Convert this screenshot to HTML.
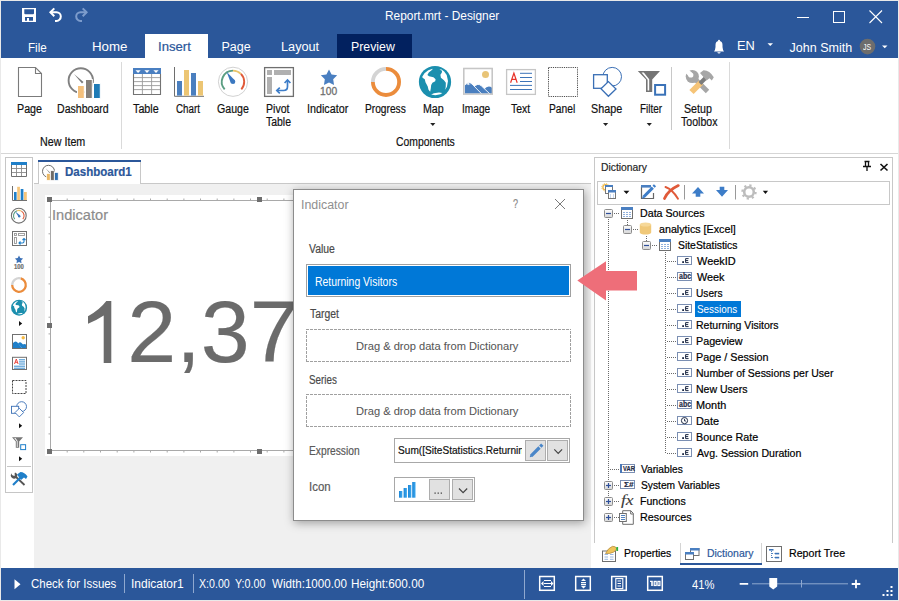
<!DOCTYPE html>
<html><head><meta charset="utf-8"><style>
html,body{margin:0;padding:0;width:899px;height:601px;overflow:hidden;background:#e9e9e9}
body{position:relative;font-family:"Liberation Sans",sans-serif}
div,svg{position:absolute;box-sizing:border-box}
.t{white-space:nowrap;line-height:1;-webkit-text-stroke:0.2px currentColor}
</style></head><body>
<div style="left:1px;top:1px;width:897px;height:599px;background:#fff"></div>
<div style="left:1px;top:1px;width:897px;height:57px;background:#2b579a"></div>
<div style="left:1px;top:568px;width:897px;height:32px;background:#2b579a"></div>
<div class="t" style="left:384.57px;top:10px;font-size:12.8px;color:#fff;transform:scaleX(0.9287);transform-origin:0 0;-webkit-text-stroke:0;">Report.mrt - Designer</div>
<div style="left:797px;top:17px;width:12px;height:1px;background:#fff"></div>
<div style="left:833px;top:11px;width:12px;height:12px;border:1px solid #fff"></div>
<svg style="left:869px;top:10px;" width="14" height="14" viewBox="0 0 14 14"><path d="M0.5 0.5L13 13M13 0.5L0.5 13" stroke="#fff" stroke-width="1.1"/></svg>
<div style="left:145px;top:34px;width:63px;height:24px;background:#fff"></div>
<div style="left:337px;top:34px;width:75px;height:24px;background:#02215f"></div>
<div class="t" style="left:27.77px;top:42px;font-size:12.5px;color:#fff;transform:scaleX(0.9316);transform-origin:0 0;-webkit-text-stroke:0;">File</div>
<div class="t" style="left:92.33px;top:41px;font-size:12.5px;color:#fff;transform:scaleX(1.0656);transform-origin:0 0;-webkit-text-stroke:0;">Home</div>
<div class="t" style="left:158.45px;top:41px;font-size:12.5px;color:#2b579a;transform:scaleX(1.0500);transform-origin:0 0;">Insert</div>
<div class="t" style="left:221.50px;top:41px;font-size:12.5px;color:#fff;-webkit-text-stroke:0;">Page</div>
<div class="t" style="left:281.18px;top:41px;font-size:12.5px;color:#fff;transform:scaleX(1.0162);transform-origin:0 0;-webkit-text-stroke:0;">Layout</div>
<div class="t" style="left:350.61px;top:41px;font-size:12.5px;color:#fff;transform:scaleX(0.9864);transform-origin:0 0;-webkit-text-stroke:0;">Preview</div>
<div class="t" style="left:737.27px;top:40px;font-size:12.5px;color:#fff;transform:scaleX(1.0250);transform-origin:0 0;-webkit-text-stroke:0;">EN</div>
<div class="t" style="left:789.60px;top:42px;font-size:12.5px;color:#fff;-webkit-text-stroke:0;">John Smith</div>
<div style="left:1px;top:153px;width:897px;height:1px;background:#d6d6d6"></div>
<div style="left:121px;top:62px;width:1px;height:87px;background:#dadada"></div>
<div style="left:729px;top:62px;width:1px;height:87px;background:#dadada"></div>
<div style="left:671px;top:67px;width:1px;height:63px;background:#c8c8c8"></div>
<div class="t" style="left:16.54px;top:103px;font-size:12.5px;color:#111;transform:scaleX(0.8571);transform-origin:0 0;">Page</div>
<div class="t" style="left:57.45px;top:103px;font-size:12.5px;color:#111;transform:scaleX(0.8450);transform-origin:0 0;">Dashboard</div>
<div class="t" style="left:133.20px;top:103px;font-size:12.5px;color:#111;transform:scaleX(0.8600);transform-origin:0 0;">Table</div>
<div class="t" style="left:175.60px;top:103px;font-size:12.5px;color:#111;transform:scaleX(0.7839);transform-origin:0 0;">Chart</div>
<div class="t" style="left:216.60px;top:103px;font-size:12.5px;color:#111;transform:scaleX(0.8486);transform-origin:0 0;">Gauge</div>
<div class="t" style="left:265.56px;top:103px;font-size:12.5px;color:#111;transform:scaleX(0.8444);transform-origin:0 0;">Pivot</div>
<div class="t" style="left:266.40px;top:116px;font-size:12.5px;color:#111;transform:scaleX(0.8367);transform-origin:0 0;">Table</div>
<div class="t" style="left:307.24px;top:103px;font-size:12.5px;color:#111;transform:scaleX(0.8596);transform-origin:0 0;">Indicator</div>
<div class="t" style="left:364.79px;top:103px;font-size:12.5px;color:#111;transform:scaleX(0.8143);transform-origin:0 0;">Progress</div>
<div class="t" style="left:423.35px;top:103px;font-size:12.5px;color:#111;transform:scaleX(0.8522);transform-origin:0 0;">Map</div>
<div class="t" style="left:462.49px;top:103px;font-size:12.5px;color:#111;transform:scaleX(0.8118);transform-origin:0 0;">Image</div>
<div class="t" style="left:510.90px;top:103px;font-size:12.5px;color:#111;transform:scaleX(0.8348);transform-origin:0 0;">Text</div>
<div class="t" style="left:548.78px;top:103px;font-size:12.5px;color:#111;transform:scaleX(0.8226);transform-origin:0 0;">Panel</div>
<div class="t" style="left:591.24px;top:103px;font-size:12.5px;color:#111;transform:scaleX(0.8629);transform-origin:0 0;">Shape</div>
<div class="t" style="left:639.71px;top:103px;font-size:12.5px;color:#111;transform:scaleX(0.7926);transform-origin:0 0;">Filter</div>
<div class="t" style="left:684.45px;top:103px;font-size:12.5px;color:#111;transform:scaleX(0.8531);transform-origin:0 0;">Setup</div>
<div class="t" style="left:681.00px;top:116px;font-size:12.5px;color:#111;transform:scaleX(0.8465);transform-origin:0 0;">Toolbox</div>
<div class="t" style="left:40.42px;top:136px;font-size:12.2px;color:#111;transform:scaleX(0.8800);transform-origin:0 0;">New Item</div>
<div class="t" style="left:395.60px;top:136px;font-size:12.2px;color:#111;transform:scaleX(0.8507);transform-origin:0 0;">Components</div>
<div style="left:5px;top:157px;width:28px;height:336px;border:1px solid #c6c6c6;background:#fff"></div>
<div style="left:7px;top:466px;width:24px;height:1px;background:#c6c6c6"></div>
<div style="left:34px;top:154px;width:557px;height:414px;background:#f0f0f0"></div>
<div style="left:34px;top:154px;width:557px;height:29px;background:#fff"></div>
<div style="left:34px;top:183px;width:557px;height:1px;background:#c8c8c8"></div>
<div style="left:38px;top:160px;width:103px;height:24px;background:#fff;border-left:1px solid #c8c8c8;border-right:1px solid #c8c8c8"></div>
<div style="left:38px;top:160px;width:103px;height:2px;background:#2b579a"></div>
<div class="t" style="left:65.40px;top:166px;font-size:12px;color:#2b579a;font-weight:700;transform:scaleX(0.9614);transform-origin:0 0;">Dashboard1</div>
<div style="left:45px;top:195px;width:500px;height:261px;background:#fff"></div>
<div style="left:50px;top:200px;width:420px;height:251px;border:1px solid #a9a9a9"></div>
<div style="left:47px;top:197px;width:5px;height:5px;background:#6e6e6e"></div>
<div style="left:47px;top:449px;width:5px;height:5px;background:#6e6e6e"></div>
<div style="left:257px;top:197px;width:5px;height:5px;background:#6e6e6e"></div>
<div style="left:257px;top:449px;width:5px;height:5px;background:#6e6e6e"></div>
<div style="left:467px;top:197px;width:5px;height:5px;background:#6e6e6e"></div>
<div style="left:467px;top:449px;width:5px;height:5px;background:#6e6e6e"></div>
<div style="left:47px;top:323px;width:5px;height:5px;background:#6e6e6e"></div>
<div style="left:467px;top:323px;width:5px;height:5px;background:#6e6e6e"></div>
<div class="t" style="left:51.53px;top:207px;font-size:15px;color:#8c8c8c;transform:scaleX(0.9737);transform-origin:0 0;">Indicator</div>
<svg style="left:0px;top:0px;" width="480" height="460" viewBox="0 0 480 460"><path d="M67.2 198.5V200M67.2 451V452.5" stroke="#a9a9a9" stroke-width="1"/><path d="M83.8 198.5V200M83.8 451V452.5" stroke="#a9a9a9" stroke-width="1"/><path d="M100.5 198.5V200M100.5 451V452.5" stroke="#a9a9a9" stroke-width="1"/><path d="M117.2 198.5V200M117.2 451V452.5" stroke="#a9a9a9" stroke-width="1"/><path d="M133.9 198.5V200M133.9 451V452.5" stroke="#a9a9a9" stroke-width="1"/><path d="M150.5 198.5V200M150.5 451V452.5" stroke="#a9a9a9" stroke-width="1"/><path d="M167.2 198.5V200M167.2 451V452.5" stroke="#a9a9a9" stroke-width="1"/><path d="M183.9 198.5V200M183.9 451V452.5" stroke="#a9a9a9" stroke-width="1"/><path d="M200.5 198.5V200M200.5 451V452.5" stroke="#a9a9a9" stroke-width="1"/><path d="M217.2 198.5V200M217.2 451V452.5" stroke="#a9a9a9" stroke-width="1"/><path d="M233.9 198.5V200M233.9 451V452.5" stroke="#a9a9a9" stroke-width="1"/><path d="M250.5 198.5V200M250.5 451V452.5" stroke="#a9a9a9" stroke-width="1"/><path d="M267.2 198.5V200M267.2 451V452.5" stroke="#a9a9a9" stroke-width="1"/><path d="M283.9 198.5V200M283.9 451V452.5" stroke="#a9a9a9" stroke-width="1"/><path d="M300.6 198.5V200M300.6 451V452.5" stroke="#a9a9a9" stroke-width="1"/><path d="M317.2 198.5V200M317.2 451V452.5" stroke="#a9a9a9" stroke-width="1"/><path d="M333.9 198.5V200M333.9 451V452.5" stroke="#a9a9a9" stroke-width="1"/><path d="M350.6 198.5V200M350.6 451V452.5" stroke="#a9a9a9" stroke-width="1"/><path d="M367.2 198.5V200M367.2 451V452.5" stroke="#a9a9a9" stroke-width="1"/><path d="M383.9 198.5V200M383.9 451V452.5" stroke="#a9a9a9" stroke-width="1"/><path d="M400.6 198.5V200M400.6 451V452.5" stroke="#a9a9a9" stroke-width="1"/><path d="M417.2 198.5V200M417.2 451V452.5" stroke="#a9a9a9" stroke-width="1"/><path d="M433.9 198.5V200M433.9 451V452.5" stroke="#a9a9a9" stroke-width="1"/><path d="M450.6 198.5V200M450.6 451V452.5" stroke="#a9a9a9" stroke-width="1"/><path d="M48.5 217.2H50M470 217.2H471.5" stroke="#a9a9a9" stroke-width="1"/><path d="M48.5 233.8H50M470 233.8H471.5" stroke="#a9a9a9" stroke-width="1"/><path d="M48.5 250.5H50M470 250.5H471.5" stroke="#a9a9a9" stroke-width="1"/><path d="M48.5 267.2H50M470 267.2H471.5" stroke="#a9a9a9" stroke-width="1"/><path d="M48.5 283.9H50M470 283.9H471.5" stroke="#a9a9a9" stroke-width="1"/><path d="M48.5 300.5H50M470 300.5H471.5" stroke="#a9a9a9" stroke-width="1"/><path d="M48.5 317.2H50M470 317.2H471.5" stroke="#a9a9a9" stroke-width="1"/><path d="M48.5 333.9H50M470 333.9H471.5" stroke="#a9a9a9" stroke-width="1"/><path d="M48.5 350.5H50M470 350.5H471.5" stroke="#a9a9a9" stroke-width="1"/><path d="M48.5 367.2H50M470 367.2H471.5" stroke="#a9a9a9" stroke-width="1"/><path d="M48.5 383.9H50M470 383.9H471.5" stroke="#a9a9a9" stroke-width="1"/><path d="M48.5 400.5H50M470 400.5H471.5" stroke="#a9a9a9" stroke-width="1"/><path d="M48.5 417.2H50M470 417.2H471.5" stroke="#a9a9a9" stroke-width="1"/><path d="M48.5 433.9H50M470 433.9H471.5" stroke="#a9a9a9" stroke-width="1"/></svg>
<svg style="left:80px;top:290px;" width="40" height="80" viewBox="0 0 40 80"><path d="M23.7 25.5L23.7 73L31.3 73L31.3 11L26.3 11Q20 19.5 8 26.2L8 33.8Q17 30 23.7 25.5Z" fill="#6b6b6b"/></svg>
<div class="t" style="left:127.30px;top:288px;font-size:88px;color:#6b6b6b;">2,37</div>
<div style="left:594px;top:157px;width:299px;height:386px;border:1px solid #c8c8c8;border-bottom:none;background:#fff"></div>
<div class="t" style="left:600.82px;top:162px;font-size:11.8px;color:#1e1e1e;transform:scaleX(0.8769);transform-origin:0 0;">Dictionary</div>
<div style="left:597px;top:181px;width:293px;height:24px;border:1px solid #c8c8c8"></div>
<div style="left:293px;top:189px;width:291px;height:332px;background:#fff;border:1px solid #8c8c8c;box-shadow:1px 2px 9px rgba(0,0,0,0.35)"></div>
<div class="t" style="left:301.47px;top:199px;font-size:12px;color:#8f8f8f;transform:scaleX(1.0333);transform-origin:0 0;-webkit-text-stroke:0">Indicator</div>
<div class="t" style="left:309.00px;top:243px;font-size:12px;color:#4a4a4a;transform:scaleX(0.8667);transform-origin:0 0;">Value</div>
<div style="left:306px;top:264px;width:265px;height:33px;border:1px solid #a0a0a0;background:#fff"></div>
<div style="left:308px;top:266px;width:261px;height:29px;background:#0078d7"></div>
<div class="t" style="left:314.83px;top:276px;font-size:12px;color:#fff;transform:scaleX(0.8688);transform-origin:0 0;-webkit-text-stroke:0;">Returning Visitors</div>
<div class="t" style="left:309.50px;top:308px;font-size:12px;color:#4a4a4a;transform:scaleX(0.8676);transform-origin:0 0;">Target</div>
<svg style="left:300px;top:324px;" width="280" height="45" viewBox="0 0 280 45"><path d="M6 5.5H271M6 37.5H271" stroke="#a0a0a0" stroke-width="1" stroke-dasharray="3 1"/><path d="M6.5 7V38M270.5 7V38" stroke="#a0a0a0" stroke-width="1" stroke-dasharray="3 1"/></svg>
<div class="t" style="left:356.24px;top:341px;font-size:10.5px;color:#555;transform:scaleX(1.0582);transform-origin:0 0;-webkit-text-stroke:0.05px #555">Drag &amp; drop data from Dictionary</div>
<div class="t" style="left:308.68px;top:374px;font-size:12px;color:#4a4a4a;transform:scaleX(0.8182);transform-origin:0 0;">Series</div>
<svg style="left:300px;top:389px;" width="280" height="45" viewBox="0 0 280 45"><path d="M6 5.5H271M6 37.5H271" stroke="#a0a0a0" stroke-width="1" stroke-dasharray="3 1"/><path d="M6.5 7V38M270.5 7V38" stroke="#a0a0a0" stroke-width="1" stroke-dasharray="3 1"/></svg>
<div class="t" style="left:356.24px;top:406px;font-size:10.5px;color:#555;transform:scaleX(1.0582);transform-origin:0 0;-webkit-text-stroke:0.05px #555">Drag &amp; drop data from Dictionary</div>
<div class="t" style="left:308.85px;top:445px;font-size:12px;color:#5a5a5a;transform:scaleX(0.8534);transform-origin:0 0;">Expression</div>
<div style="left:394px;top:438px;width:176px;height:25px;border:1px solid #a8a8a8;background:#fff"></div>
<div style="left:395px;top:439px;width:127px;height:23px;overflow:hidden">
<div class="t" style="left:3.00px;top:6px;font-size:11.5px;color:#111;transform:scaleX(0.88);transform-origin:0 0">Sum([SiteStatistics.Returning Visitors])</div>
</div>
<div style="left:525px;top:440px;width:21px;height:21px;background:#e1e1e1;border:1px solid #adadad"></div>
<div style="left:547px;top:440px;width:21px;height:21px;background:#e1e1e1;border:1px solid #adadad"></div>
<div class="t" style="left:308.55px;top:481px;font-size:12px;color:#5a5a5a;transform:scaleX(0.9524);transform-origin:0 0;">Icon</div>
<div style="left:394px;top:477px;width:81px;height:25px;border:1px solid #a8a8a8;background:#fff"></div>
<div style="left:429px;top:479px;width:21px;height:21px;background:#e1e1e1;border:1px solid #adadad"></div>
<div style="left:452px;top:479px;width:21px;height:21px;background:#e1e1e1;border:1px solid #adadad"></div>
<div class="t" style="left:31.30px;top:578px;font-size:12px;color:#fff;transform:scaleX(0.9551);transform-origin:0 0;-webkit-text-stroke:0;">Check for Issues</div>
<div style="left:124px;top:574px;width:1px;height:19px;background:#8fa8cf"></div>
<div class="t" style="left:131.00px;top:578px;font-size:12px;color:#fff;-webkit-text-stroke:0;">Indicator1</div>
<div style="left:193px;top:574px;width:1px;height:19px;background:#8fa8cf"></div>
<div class="t" style="left:198.50px;top:578px;font-size:12px;color:#fff;transform:scaleX(0.8857);transform-origin:0 0;-webkit-text-stroke:0;">X:0.00</div>
<div class="t" style="left:235.00px;top:578px;font-size:12px;color:#fff;transform:scaleX(0.8971);transform-origin:0 0;-webkit-text-stroke:0;">Y:0.00</div>
<div class="t" style="left:271.50px;top:578px;font-size:12px;color:#fff;transform:scaleX(0.9675);transform-origin:0 0;-webkit-text-stroke:0;">Width:1000.00</div>
<div class="t" style="left:350.52px;top:578px;font-size:12px;color:#fff;transform:scaleX(0.9797);transform-origin:0 0;-webkit-text-stroke:0;">Height:600.00</div>
<div style="left:524px;top:570px;width:1px;height:29px;background:#8fa8cf"></div>
<div class="t" style="left:691.70px;top:579px;font-size:12px;color:#fff;transform:scaleX(0.9333);transform-origin:0 0;-webkit-text-stroke:0;">41%</div>
<svg style="left:17px;top:66px;" width="26" height="32" viewBox="0 0 26 32"><path d="M1.5 1.5H18.5L24.5 7.5V30.5H1.5Z M18.5 1.5V7.5H24.5" fill="none" stroke="#7b7b7b" stroke-width="1.1"/></svg>
<svg style="left:66px;top:66px;" width="36" height="34" viewBox="0 0 36 34"><circle cx="14.8" cy="14.5" r="12.2" fill="none" stroke="#808080" stroke-width="1.9"/><path d="M8 8L17.5 16L16 17.5Z" fill="#7a7a7a"/><rect x="11.5" y="19.5" width="6.8" height="13" fill="#f4c07c" stroke="#fff" stroke-width="1"/><rect x="19.5" y="13.5" width="6.8" height="19" fill="#857f79" stroke="#fff" stroke-width="1"/><rect x="27.5" y="17.5" width="6.8" height="15" fill="#1f7bb6" stroke="#fff" stroke-width="1"/></svg>
<svg style="left:0px;top:0px;" width="170" height="100" viewBox="0 0 170 100"><rect x="133" y="68" width="28" height="6" fill="#4a7fc1"/><path d="M135.5 70.2H140.7L138.1 72.9Z" fill="#fff"/><path d="M144.4 70.2H149.6L147 72.9Z" fill="#fff"/><path d="M153.4 70.2H158.6L156 72.9Z" fill="#fff"/><path d="M133.5 74V94.5H160.5V74" fill="none" stroke="#737373" stroke-width="1.1"/><path d="M134 77.6H160M134 81.6H160M134 85.6H160M134 89.6H160M142.4 74V94M151.6 74V94" stroke="#9a9a9a" stroke-width="0.9"/></svg>
<svg style="left:0px;top:0px;" width="210" height="100" viewBox="0 0 210 100"><path d="M174.5 67V96.3H204" fill="none" stroke="#6e6e6e" stroke-width="1"/><rect x="177" y="81" width="5" height="14.6" fill="#4a7fbf"/><rect x="184" y="70" width="5" height="25.6" fill="#ecc573"/><rect x="191" y="73" width="5" height="22.6" fill="#4a7fbf"/><rect x="198" y="81" width="5" height="14.6" fill="#ecc573"/></svg>
<svg style="left:0px;top:0px;" width="260" height="100" viewBox="0 0 260 100"><circle cx="233" cy="81.8" r="14.6" fill="none" stroke="#d2d2d2" stroke-width="1"/><path d="M224.68 89.29A11.2 11.2 0 0 1 233.00 70.60" fill="none" stroke="#5b9e82" stroke-width="1.9"/><path d="M233.00 70.60A11.2 11.2 0 0 1 240.92 73.88" fill="none" stroke="#eac56c" stroke-width="1.9"/><path d="M240.92 73.88A11.2 11.2 0 0 1 241.32 89.29" fill="none" stroke="#e05a39" stroke-width="1.9"/><path d="M226.6 71.8L235 80.5L231 83.5Z" fill="#3b78c0"/><circle cx="233" cy="81.8" r="2.3" fill="#3b78c0"/></svg>
<svg style="left:0px;top:0px;" width="300" height="100" viewBox="0 0 300 100"><rect x="264.6" y="67.6" width="28.8" height="28.8" fill="none" stroke="#6f6f6f" stroke-width="1.3"/><rect x="267" y="70" width="5" height="5" fill="#b0b0b0"/><rect x="274" y="70" width="17" height="5" fill="#b0b0b0"/><rect x="267" y="77" width="5" height="17" fill="#b0b0b0"/><path d="M277 90.5H283.5Q287.5 90.5 287.5 86.5V80" fill="none" stroke="#3d7dc8" stroke-width="1.7"/><path d="M279.8 87.6L276.8 90.5L279.8 93.4M284.6 83L287.5 80L290.4 83" fill="none" stroke="#3d7dc8" stroke-width="1.7"/></svg>
<svg style="left:0px;top:0px;" width="345" height="100" viewBox="0 0 345 100"><polygon points="329.00,69.40 331.59,74.44 337.18,75.34 333.18,79.36 334.05,84.96 329.00,82.40 323.95,84.96 324.82,79.36 320.82,75.34 326.41,74.44" fill="#4a7fc1"/></svg>
<div class="t" style="left:320.00px;top:86px;font-size:11px;color:#6e6e6e;transform:scaleX(0.9333);transform-origin:0 0;-webkit-text-stroke:0.3px #6e6e6e">100</div>
<svg style="left:0px;top:0px;" width="410" height="100" viewBox="0 0 410 100"><path d="M372.90 81.90A13.1 13.1 0 0 1 386.00 68.80" fill="none" stroke="#d4d4d4" stroke-width="3.8"/><path d="M386.00 68.80A13.1 13.1 0 1 1 372.90 81.90" fill="none" stroke="#eb8c3c" stroke-width="3.8"/></svg>
<svg style="left:0px;top:0px;" width="460" height="100" viewBox="0 0 460 100"><circle cx="435" cy="82" r="16.1" fill="#1b8fae"/><g transform="translate(415 62)"><polygon points="7.27,14.85 9.48,11.37 13.27,8.21 17.69,6.64 17.19,7.71 13.78,10.62 12.39,12.95 14.03,14.28 18.45,15.17 20.60,17.19 20.22,19.34 17.44,20.85 16.18,22.88 15.80,26.54 15.17,29.70 13.52,27.80 12.64,24.14 10.49,20.35 9.79,17.19 7.58,15.67" fill="#fff"/><polygon points="24.33,7.46 27.05,8.85 26.79,10.87 25.40,12.64 25.91,15.80 28.94,18.20 30.84,20.85 30.71,25.28 29.83,27.80 31.91,24.96 32.99,18.96 31.72,12.95 29.19,9.48 26.54,7.46" fill="#fff"/><polygon points="16.11,32.61 18.96,31.34 24.01,30.46 27.30,30.96 25.40,32.35 20.35,33.24" fill="#fff"/></g></svg>
<svg style="left:0px;top:0px;" width="500" height="100" viewBox="0 0 500 100"><rect x="463.7" y="68.5" width="28.6" height="25.6" fill="#fff" stroke="#c6c6c6" stroke-width="1.3"/><circle cx="485.5" cy="74.5" r="3.5" fill="#e8c477"/><path d="M484 89.5Q488 84.6 492 87.8V93.5H488Z" fill="#4a7fbf"/><path d="M473.5 87.5Q477.5 82.3 481.3 85.8L490 94H474Z" fill="#4a7fbf" stroke="#fff" stroke-width="0.9"/><path d="M464.3 94V85.8Q468.2 80.2 472 84L481.8 94Z" fill="#4a7fbf" stroke="#fff" stroke-width="0.9"/><rect x="463.7" y="68.5" width="28.6" height="25.6" fill="none" stroke="#c6c6c6" stroke-width="1.3"/><path d="M466 84.6L468.2 82.8L470.6 84.8L469 84.3L468.2 85.2L467.3 84.3Z" fill="#fff"/></svg>
<svg style="left:0px;top:0px;" width="540" height="100" viewBox="0 0 540 100"><rect x="506.6" y="69.6" width="28.8" height="24.8" fill="#fff" stroke="#c6c6c6" stroke-width="1.3"/><path d="M510.6 82.8L513.9 73.2L517.2 82.8M511.8 79.3H516" fill="none" stroke="#e8332a" stroke-width="1.2"/><path d="M520 73.3H532M520 77.5H532M520 81.5H532M510 85.4H532M510 89.5H532" stroke="#3d74b8" stroke-width="1"/></svg>
<svg style="left:0px;top:0px;" width="580" height="100" viewBox="0 0 580 100"><rect x="548.5" y="67.5" width="29" height="29" fill="none" stroke="#4d4d4d" stroke-width="1" stroke-dasharray="1.2 1"/></svg>
<svg style="left:0px;top:0px;" width="630" height="100" viewBox="0 0 630 100"><circle cx="612.2" cy="76.7" r="9.3" fill="#fff" stroke="#3a6fb5" stroke-width="1"/><rect x="593.6" y="74.7" width="13.7" height="13.6" fill="#fff" stroke="#3a6fb5" stroke-width="1.3"/><polygon points="601,88.8 608.4,81.6 616,89 608.4,96.3" fill="#fff" stroke="#3a6fb5" stroke-width="1.3"/></svg>
<svg style="left:0px;top:0px;" width="670" height="100" viewBox="0 0 670 100"><path d="M637.8 71.1H660L652.2 79.5V91.9H646V79.5Z" fill="#757575"/><path d="M641.5 72.6L647.6 79.8V90.5H649.2V79.2L643.8 72.6Z" fill="#fff"/><rect x="655.1" y="85" width="10" height="9.7" fill="#fff" stroke="#3a72b8" stroke-width="2"/></svg>
<svg style="left:0px;top:0px;" width="720" height="100" viewBox="0 0 720 100"><path d="M695 79L707.5 91.5" stroke="#a6a6a6" stroke-width="4.8"/><circle cx="692.3" cy="76.5" r="6.6" fill="#a6a6a6"/><circle cx="690.8" cy="75" r="2.6" fill="#fff"/><path d="M690.8 75L685 69.2" stroke="#fff" stroke-width="4.6"/><path d="M701 82.5L691.5 92" stroke="#f6c477" stroke-width="6"/><path d="M707.5 76L700 83.5" stroke="#7c7c7c" stroke-width="4"/><path d="M700 73L703.5 70.2Q709.5 70 713.8 77.3L711.8 80.6L709.5 78.3L706.5 80.5Z" fill="#a6a6a6"/></svg>
<svg style="left:0px;top:0px;" width="670" height="130" viewBox="0 0 670 130"><path d="M430.2 123H435.4L432.8 126Z" fill="#222"/></svg>
<svg style="left:0px;top:0px;" width="670" height="130" viewBox="0 0 670 130"><path d="M603 123H608.2L605.6 126Z" fill="#222"/></svg>
<svg style="left:0px;top:0px;" width="670" height="130" viewBox="0 0 670 130"><path d="M646.7 123H651.9000000000001L649.3000000000001 126Z" fill="#222"/></svg>
<svg style="left:0px;top:0px;" width="34" height="500" viewBox="0 0 34 500"><rect x="11" y="162" width="16" height="3" fill="#1f7fc9"/><path d="M11.5 165V176.5H26.5V165" fill="none" stroke="#707070" stroke-width="1"/><path d="M12 168.5H26M12 172.5H26M16.5 165V176M21.5 165V176" stroke="#8a8a8a" stroke-width="0.9"/><path d="M12.5 186V200.5H27" fill="none" stroke="#707070" stroke-width="1"/><rect x="14" y="192" width="2.6" height="8" fill="#1f7fc9"/><rect x="17.2" y="186.8" width="2.7" height="13.2" fill="#f6c57a"/><rect x="20.7" y="189" width="2.7" height="11" fill="#1f7fc9"/><rect x="24" y="192" width="2.8" height="8" fill="#f6c57a"/><circle cx="18.8" cy="215.7" r="7.4" fill="none" stroke="#707070" stroke-width="1.1"/><path d="M14.74 219.11A5.3 5.3 0 0 1 16.99 210.72" fill="none" stroke="#5b9e82" stroke-width="1.1"/><path d="M16.99 210.72A5.3 5.3 0 0 1 21.45 211.11" fill="none" stroke="#eac56c" stroke-width="1.1"/><path d="M21.45 211.11A5.3 5.3 0 0 1 22.86 219.11" fill="none" stroke="#e05a39" stroke-width="1.1"/><path d="M15.2 211.5L20 215.3L18.5 216.8Z" fill="#3b78c0"/><circle cx="19.2" cy="216.2" r="1.2" fill="#3b78c0"/><rect x="12.5" y="231.5" width="14" height="14" fill="none" stroke="#707070" stroke-width="1"/><rect x="14.5" y="233.5" width="2" height="2" fill="none" stroke="#999" stroke-width="0.9"/><rect x="18.5" y="233.5" width="6" height="2" fill="none" stroke="#999" stroke-width="0.9"/><rect x="14.5" y="237.5" width="2" height="6" fill="none" stroke="#999" stroke-width="0.9"/><path d="M19 243H22.5Q24 243 24 241.5V238.5M20.5 241.5L19 243L20.5 244.5M22.5 240L24 238.5L25.5 240" fill="none" stroke="#1f7fc9" stroke-width="1.1"/><polygon points="19.00,255.50 20.29,258.02 23.09,258.47 21.09,260.48 21.53,263.28 19.00,262.00 16.47,263.28 16.91,260.48 14.91,258.47 17.71,258.02" fill="#3d72b8"/><path d="M12.20 285.00A6.8 6.8 0 0 1 20.76 278.43" fill="none" stroke="#d4d4d4" stroke-width="2.3"/><path d="M20.76 278.43A6.8 6.8 0 1 1 12.20 285.00" fill="none" stroke="#eb8c3c" stroke-width="2.3"/><circle cx="19.1" cy="307.7" r="8" fill="#1b8fae"/><g transform="translate(11.1 299.7) scale(0.5)"><g transform="translate(-3.9 -3.9)"><polygon points="7.27,14.85 9.48,11.37 13.27,8.21 17.69,6.64 17.19,7.71 13.78,10.62 12.39,12.95 14.03,14.28 18.45,15.17 20.60,17.19 20.22,19.34 17.44,20.85 16.18,22.88 15.80,26.54 15.17,29.70 13.52,27.80 12.64,24.14 10.49,20.35 9.79,17.19 7.58,15.67" fill="#fff"/><polygon points="24.33,7.46 27.05,8.85 26.79,10.87 25.40,12.64 25.91,15.80 28.94,18.20 30.84,20.85 30.71,25.28 29.83,27.80 31.91,24.96 32.99,18.96 31.72,12.95 29.19,9.48 26.54,7.46" fill="#fff"/><polygon points="16.11,32.61 18.96,31.34 24.01,30.46 27.30,30.96 25.40,32.35 20.35,33.24" fill="#fff"/></g></g><path d="M19 321L22.2 323.5L19 326Z" fill="#111"/><path d="M19 423.2L22.2 425.7L19 428.2Z" fill="#111"/><path d="M19 456.2L22.2 458.7L19 461.2Z" fill="#111"/><rect x="12.5" y="334.5" width="14" height="14" fill="#fff" stroke="#707070" stroke-width="1"/><circle cx="23.2" cy="337.7" r="1.7" fill="#f5b942"/><path d="M13 348V343Q15 340.5 17 342L22 348Z" fill="#1f7fc9"/><path d="M18 343.5Q20 341.5 21.5 343L26 347.5V348H22Z" fill="#1f7fc9"/><path d="M22.5 345Q24 343.3 26 344.5V348Z" fill="#1f7fc9"/><rect x="12.5" y="357.3" width="14" height="12.2" fill="#fff" stroke="#707070" stroke-width="1"/><path d="M14.5 364L16.3 359L18.1 364M15.2 362.3H17.4" fill="none" stroke="#e8332a" stroke-width="0.9"/><path d="M19 359.8H25M19 361.9H25M19 364H25M14 366.2H25M14 368.2H25" stroke="#1f7fc9" stroke-width="0.9"/><rect x="12.5" y="380.5" width="13.5" height="13" fill="none" stroke="#444" stroke-width="1" stroke-dasharray="2 1"/><circle cx="21.6" cy="406.6" r="4.9" fill="#fff" stroke="#3a6fb5" stroke-width="0.9"/><rect x="11.5" y="406.3" width="7.2" height="7" fill="#fff" stroke="#3a6fb5" stroke-width="0.9"/><polygon points="15,412.6 19.3,408.3 23.6,412.6 19.3,416.9" fill="#fff" stroke="#3a6fb5" stroke-width="0.9"/><path d="M12 437.2H23L19.2 441.5V447.8H15.8V441.5Z" fill="#757575"/><path d="M14.2 438L16.8 441.2V447H17.6V441L15.5 438Z" fill="#fff"/><rect x="20.7" y="444.7" width="4.9" height="4.9" fill="#fff" stroke="#1f7fc9" stroke-width="1"/><path d="M15 476L24.5 485" stroke="#555" stroke-width="1.8"/><path d="M11.8 473.2A3 3 0 1 0 16.4 477.6A3 3 0 0 0 15 472.5Q14 474 15 475.3Q13.8 476.6 11.8 474.7Z" fill="#555"/><path d="M20.5 477.5L13 485" stroke="#1f7fc9" stroke-width="2.2"/><path d="M17 474.5L20.5 472Q24.5 472 27.5 476.5L26 479L24 477.5L21 480Z" fill="#1f7fc9"/></svg>
<div class="t" style="left:14.00px;top:264px;font-size:6.5px;color:#6e6e6e;font-weight:700;transform:scaleX(0.9091);transform-origin:0 0;">100</div>
<svg style="left:0px;top:0px;" width="899" height="601" viewBox="0 0 899 601"><defs><linearGradient id="eg" x1="0" y1="0" x2="0" y2="1"><stop offset="0" stop-color="#fdfdfd"/><stop offset="1" stop-color="#d6d6d6"/></linearGradient></defs><path d="M608.5 219V510" stroke="#6a6a6a" stroke-width="1" stroke-dasharray="1 1"/><rect x="604.5" y="209.5" width="8" height="8" rx="1" fill="url(#eg)" stroke="#8c8c8c" stroke-width="1"/><path d="M606 213.5H611" stroke="#2f4f9a" stroke-width="1.2"/><path d="M614 213.5H620" stroke="#6a6a6a" stroke-width="1" stroke-dasharray="1 1"/><rect x="621.5" y="207.5" width="11" height="11" fill="#fff" stroke="#707070" stroke-width="1"/><rect x="621" y="207" width="12" height="3" fill="#4a7fc1"/><path d="M623 212.5H631" stroke="#8fb0dd" stroke-width="1" stroke-dasharray="2 1"/><path d="M623 214.5H631" stroke="#8fb0dd" stroke-width="1" stroke-dasharray="2 1"/><path d="M623 216.5H631" stroke="#8fb0dd" stroke-width="1" stroke-dasharray="2 1"/><path d="M627.5 220V225" stroke="#6a6a6a" stroke-width="1" stroke-dasharray="1 1"/><rect x="623.5" y="225.5" width="8" height="8" rx="1" fill="url(#eg)" stroke="#8c8c8c" stroke-width="1"/><path d="M625 229.5H630" stroke="#2f4f9a" stroke-width="1.2"/><path d="M633 229.5H639" stroke="#6a6a6a" stroke-width="1" stroke-dasharray="1 1"/><path d="M639.8 224.5V232.5A5.7 2 0 0 0 651.2 232.5V224.5Z" fill="#f0c878"/><ellipse cx="645.5" cy="224.5" rx="5.7" ry="2.1" fill="#f6d898"/><path d="M646.5 236V241" stroke="#6a6a6a" stroke-width="1" stroke-dasharray="1 1"/><rect x="642.5" y="241.5" width="8" height="8" rx="1" fill="url(#eg)" stroke="#8c8c8c" stroke-width="1"/><path d="M644 245.5H649" stroke="#2f4f9a" stroke-width="1.2"/><path d="M652 245.5H658" stroke="#6a6a6a" stroke-width="1" stroke-dasharray="1 1"/><rect x="659.5" y="239.5" width="11" height="11" fill="#fff" stroke="#707070" stroke-width="1"/><rect x="659" y="239" width="12" height="3" fill="#4a7fc1"/><path d="M661 244.5H669" stroke="#8fb0dd" stroke-width="1" stroke-dasharray="2 1"/><path d="M661 246.5H669" stroke="#8fb0dd" stroke-width="1" stroke-dasharray="2 1"/><path d="M661 248.5H669" stroke="#8fb0dd" stroke-width="1" stroke-dasharray="2 1"/><path d="M665.5 252V453" stroke="#6a6a6a" stroke-width="1" stroke-dasharray="1 1"/><path d="M667 261.5H677" stroke="#6a6a6a" stroke-width="1" stroke-dasharray="1 1"/><rect x="677.5" y="256.5" width="14" height="8" fill="#fff" stroke="#7b8fb3" stroke-width="1"/><rect x="682.2" y="261.2" width="1.8" height="1.8" fill="#1e2a45"/><path d="M688.6 258.6H685.6V262.6H688.6M685.6 260.6H688.2" fill="none" stroke="#1e2a45" stroke-width="1"/><path d="M667 277.5H677" stroke="#6a6a6a" stroke-width="1" stroke-dasharray="1 1"/><rect x="677.5" y="272.5" width="14" height="8" fill="#fff" stroke="#7b8fb3" stroke-width="1"/><path d="M667 293.5H677" stroke="#6a6a6a" stroke-width="1" stroke-dasharray="1 1"/><rect x="677.5" y="288.5" width="14" height="8" fill="#fff" stroke="#7b8fb3" stroke-width="1"/><rect x="682.2" y="293.2" width="1.8" height="1.8" fill="#1e2a45"/><path d="M688.6 290.6H685.6V294.6H688.6M685.6 292.6H688.2" fill="none" stroke="#1e2a45" stroke-width="1"/><path d="M667 309.5H677" stroke="#6a6a6a" stroke-width="1" stroke-dasharray="1 1"/><rect x="677.5" y="304.5" width="14" height="8" fill="#fff" stroke="#7b8fb3" stroke-width="1"/><rect x="682.2" y="309.2" width="1.8" height="1.8" fill="#1e2a45"/><path d="M688.6 306.6H685.6V310.6H688.6M685.6 308.6H688.2" fill="none" stroke="#1e2a45" stroke-width="1"/><path d="M667 325.5H677" stroke="#6a6a6a" stroke-width="1" stroke-dasharray="1 1"/><rect x="677.5" y="320.5" width="14" height="8" fill="#fff" stroke="#7b8fb3" stroke-width="1"/><rect x="682.2" y="325.2" width="1.8" height="1.8" fill="#1e2a45"/><path d="M688.6 322.6H685.6V326.6H688.6M685.6 324.6H688.2" fill="none" stroke="#1e2a45" stroke-width="1"/><path d="M667 341.5H677" stroke="#6a6a6a" stroke-width="1" stroke-dasharray="1 1"/><rect x="677.5" y="336.5" width="14" height="8" fill="#fff" stroke="#7b8fb3" stroke-width="1"/><rect x="682.2" y="341.2" width="1.8" height="1.8" fill="#1e2a45"/><path d="M688.6 338.6H685.6V342.6H688.6M685.6 340.6H688.2" fill="none" stroke="#1e2a45" stroke-width="1"/><path d="M667 357.5H677" stroke="#6a6a6a" stroke-width="1" stroke-dasharray="1 1"/><rect x="677.5" y="352.5" width="14" height="8" fill="#fff" stroke="#7b8fb3" stroke-width="1"/><rect x="682.2" y="357.2" width="1.8" height="1.8" fill="#1e2a45"/><path d="M688.6 354.6H685.6V358.6H688.6M685.6 356.6H688.2" fill="none" stroke="#1e2a45" stroke-width="1"/><path d="M667 373.5H677" stroke="#6a6a6a" stroke-width="1" stroke-dasharray="1 1"/><rect x="677.5" y="368.5" width="14" height="8" fill="#fff" stroke="#7b8fb3" stroke-width="1"/><rect x="682.2" y="373.2" width="1.8" height="1.8" fill="#1e2a45"/><path d="M688.6 370.6H685.6V374.6H688.6M685.6 372.6H688.2" fill="none" stroke="#1e2a45" stroke-width="1"/><path d="M667 389.5H677" stroke="#6a6a6a" stroke-width="1" stroke-dasharray="1 1"/><rect x="677.5" y="384.5" width="14" height="8" fill="#fff" stroke="#7b8fb3" stroke-width="1"/><rect x="682.2" y="389.2" width="1.8" height="1.8" fill="#1e2a45"/><path d="M688.6 386.6H685.6V390.6H688.6M685.6 388.6H688.2" fill="none" stroke="#1e2a45" stroke-width="1"/><path d="M667 405.5H677" stroke="#6a6a6a" stroke-width="1" stroke-dasharray="1 1"/><rect x="677.5" y="400.5" width="14" height="8" fill="#fff" stroke="#7b8fb3" stroke-width="1"/><path d="M667 421.5H677" stroke="#6a6a6a" stroke-width="1" stroke-dasharray="1 1"/><rect x="677.5" y="416.5" width="14" height="8" fill="#fff" stroke="#7b8fb3" stroke-width="1"/><path d="M667 437.5H677" stroke="#6a6a6a" stroke-width="1" stroke-dasharray="1 1"/><rect x="677.5" y="432.5" width="14" height="8" fill="#fff" stroke="#7b8fb3" stroke-width="1"/><rect x="682.2" y="437.2" width="1.8" height="1.8" fill="#1e2a45"/><path d="M688.6 434.6H685.6V438.6H688.6M685.6 436.6H688.2" fill="none" stroke="#1e2a45" stroke-width="1"/><path d="M667 453.5H677" stroke="#6a6a6a" stroke-width="1" stroke-dasharray="1 1"/><rect x="677.5" y="448.5" width="14" height="8" fill="#fff" stroke="#7b8fb3" stroke-width="1"/><rect x="682.2" y="453.2" width="1.8" height="1.8" fill="#1e2a45"/><path d="M688.6 450.6H685.6V454.6H688.6M685.6 452.6H688.2" fill="none" stroke="#1e2a45" stroke-width="1"/><path d="M610 469.5H620" stroke="#6a6a6a" stroke-width="1" stroke-dasharray="1 1"/><rect x="620.5" y="464.5" width="14" height="8" fill="#fff" stroke="#7b8fb3" stroke-width="1"/><rect x="620" y="464" width="2" height="9" fill="#4a78b8"/><rect x="604.5" y="481.5" width="8" height="8" rx="1" fill="url(#eg)" stroke="#8c8c8c" stroke-width="1"/><path d="M606 485.5H611" stroke="#2f4f9a" stroke-width="1.2"/><path d="M608.5 483V488" stroke="#2f4f9a" stroke-width="1.2"/><path d="M614 485.5H620" stroke="#6a6a6a" stroke-width="1" stroke-dasharray="1 1"/><rect x="604.5" y="497.5" width="8" height="8" rx="1" fill="url(#eg)" stroke="#8c8c8c" stroke-width="1"/><path d="M606 501.5H611" stroke="#2f4f9a" stroke-width="1.2"/><path d="M608.5 499V504" stroke="#2f4f9a" stroke-width="1.2"/><path d="M614 501.5H620" stroke="#6a6a6a" stroke-width="1" stroke-dasharray="1 1"/><rect x="604.5" y="513.5" width="8" height="8" rx="1" fill="url(#eg)" stroke="#8c8c8c" stroke-width="1"/><path d="M606 517.5H611" stroke="#2f4f9a" stroke-width="1.2"/><path d="M608.5 515V520" stroke="#2f4f9a" stroke-width="1.2"/><path d="M614 517.5H620" stroke="#6a6a6a" stroke-width="1" stroke-dasharray="1 1"/><rect x="620.5" y="480.5" width="14" height="8" fill="#fff" stroke="#7b8fb3" stroke-width="1"/><path d="M622.7 510.7H630.7L633.3 513.3V524.3H622.7Z" fill="#fff" stroke="#6f6f6f" stroke-width="1"/><path d="M630.7 510.7V514H633.3" fill="none" stroke="#6f6f6f" stroke-width="1"/><rect x="619.5" y="513.5" width="6.8" height="8" fill="#fff" stroke="#6f6f6f" stroke-width="1"/><path d="M621 515.5H625M621 517.5H625M621 519.5H625" stroke="#3d74b8" stroke-width="0.9"/></svg>
<div style="left:695px;top:301px;width:46px;height:16px;background:#0078d7"></div>
<div class="t" style="left:639.63px;top:208px;font-size:11px;color:#000;transform:scaleX(0.9697);transform-origin:0 0;">Data Sources</div>
<div class="t" style="left:659.00px;top:224px;font-size:11px;color:#000;transform:scaleX(0.9731);transform-origin:0 0;">analytics [Excel]</div>
<div class="t" style="left:678.00px;top:240px;font-size:11px;color:#000;transform:scaleX(0.9444);transform-origin:0 0;">SiteStatistics</div>
<div class="t" style="left:697.30px;top:256px;font-size:11px;color:#000;transform:scaleX(0.9949);transform-origin:0 0;">WeekID</div>
<div class="t" style="left:697.30px;top:272px;font-size:11px;color:#000;transform:scaleX(0.9857);transform-origin:0 0;">Week</div>
<div class="t" style="left:696.38px;top:288px;font-size:11px;color:#000;transform:scaleX(0.9214);transform-origin:0 0;">Users</div>
<div class="t" style="left:697.30px;top:304px;font-size:11px;color:#fff;transform:scaleX(0.9000);transform-origin:0 0;-webkit-text-stroke:0;">Sessions</div>
<div class="t" style="left:696.35px;top:320px;font-size:11px;color:#000;transform:scaleX(0.9529);transform-origin:0 0;">Returning Visitors</div>
<div class="t" style="left:696.32px;top:336px;font-size:11px;color:#000;transform:scaleX(0.9766);transform-origin:0 0;">Pageview</div>
<div class="t" style="left:696.32px;top:352px;font-size:11px;color:#000;transform:scaleX(0.9808);transform-origin:0 0;">Page / Session</div>
<div class="t" style="left:696.35px;top:368px;font-size:11px;color:#000;transform:scaleX(0.9524);transform-origin:0 0;">Number of Sessions per User</div>
<div class="t" style="left:696.34px;top:384px;font-size:11px;color:#000;transform:scaleX(0.9566);transform-origin:0 0;">New Users</div>
<div class="t" style="left:696.31px;top:400px;font-size:11px;color:#000;transform:scaleX(0.9897);transform-origin:0 0;">Month</div>
<div class="t" style="left:696.31px;top:416px;font-size:11px;color:#000;transform:scaleX(0.9909);transform-origin:0 0;">Date</div>
<div class="t" style="left:696.32px;top:432px;font-size:11px;color:#000;transform:scaleX(0.9778);transform-origin:0 0;">Bounce Rate</div>
<div class="t" style="left:697.30px;top:448px;font-size:11px;color:#000;transform:scaleX(0.9602);transform-origin:0 0;">Avg. Session Duration</div>
<div class="t" style="left:640.60px;top:464px;font-size:11px;color:#000;transform:scaleX(0.9267);transform-origin:0 0;">Variables</div>
<div class="t" style="left:640.60px;top:480px;font-size:11px;color:#000;transform:scaleX(0.9294);transform-origin:0 0;">System Variables</div>
<div class="t" style="left:639.64px;top:496px;font-size:11px;color:#000;transform:scaleX(0.9596);transform-origin:0 0;">Functions</div>
<div class="t" style="left:639.62px;top:512px;font-size:11px;color:#000;transform:scaleX(0.9804);transform-origin:0 0;">Resources</div>
<div class="t" style="left:678.60px;top:271px;font-size:9.5px;color:#1e2a45;font-weight:700;transform:scaleX(0.7375);transform-origin:0 0;">abc</div>
<div class="t" style="left:678.60px;top:399px;font-size:9.5px;color:#1e2a45;font-weight:700;transform:scaleX(0.7375);transform-origin:0 0;">abc</div>
<div class="t" style="left:622.60px;top:465px;font-size:7.5px;color:#1e2a45;font-weight:700;transform:scaleX(0.7733);transform-origin:0 0;">VAR</div>
<div class="t" style="left:623.50px;top:481px;font-size:7.5px;color:#1e2a45;font-weight:700;transform:scaleX(1.1111);transform-origin:0 0;">Σ#</div>
<div class="t" style="left:621.20px;top:494px;font-size:14px;color:#3a3a3a;transform:scaleX(1.2500);transform-origin:0 0;font-family:'Liberation Serif';font-style:italic;-webkit-text-stroke:0.1px #3a3a3a">fx</div>
<svg style="left:677px;top:416px;" width="15" height="10" viewBox="0 0 15 10"><rect x="0.5" y="0.5" width="14" height="8" fill="#fff" stroke="#7b8fb3" stroke-width="1"/><circle cx="7.5" cy="4.6" r="3.1" fill="none" stroke="#1e2a45" stroke-width="1"/><path d="M7.5 2.8V5H9" fill="none" stroke="#1e2a45" stroke-width="0.9"/></svg>
<svg style="left:860px;top:160px;" width="32" height="14" viewBox="0 0 32 14"><path d="M4.5 1.5H9.5M5.5 1.5V6.5M8.5 1.5V6.5M3 6.5H11M7 6.5V11" fill="none" stroke="#111" stroke-width="1.3"/><path d="M20.5 4L27.5 10.5M27.5 4L20.5 10.5" stroke="#111" stroke-width="1.6"/></svg>
<svg style="left:0px;top:0px;" width="899" height="601" viewBox="0 0 899 601"><circle cx="605.5" cy="187.3" r="2.6" fill="none" stroke="#f0b848" stroke-width="1.3"/><circle cx="605.5" cy="187.3" r="3.8" fill="none" stroke="#f0b848" stroke-width="0.8" stroke-dasharray="1 1"/><rect x="605.5" y="185.5" width="7" height="8" fill="#fff" stroke="#777" stroke-width="1"/><rect x="605" y="185" width="8" height="2" fill="#4a7fc1"/><rect x="608.5" y="190.5" width="7" height="8" fill="#fff" stroke="#777" stroke-width="1"/><rect x="608" y="190" width="8" height="2.5" fill="#4a7fc1"/><path d="M610 194.5h1v1h-1zM613 194.5h1v1h-1zM610 196.5h1v1h-1zM613 196.5h1v1h-1z" fill="#8fb0dd"/><path d="M623.5 190.8H629.4L626.45 194Z" fill="#111"/><path d="M641.5 186.5V198.5H653.5V193" fill="none" stroke="#666" stroke-width="1.2"/><rect x="641" y="185" width="10" height="2.6" fill="#4a7fc1"/><path d="M643.8 196.8L652.8 187.6" stroke="#3d7dc8" stroke-width="3"/><path d="M653.6 186.8L655 185.3" stroke="#3d7dc8" stroke-width="3"/><path d="M642 198.8L642.8 195.6L645 197.8Z" fill="#3d7dc8"/><path d="M664.5 198.5Q668 190.5 678.3 185.6" fill="none" stroke="#e05a39" stroke-width="2.8" stroke-linecap="round"/><path d="M665.5 187Q672.5 189.5 678 198.8" fill="none" stroke="#e05a39" stroke-width="1.9" stroke-linecap="round"/><path d="M684.5 185V199.5M735.5 185V199.5" stroke="#999" stroke-width="1"/><path d="M692 193.5L698 187L704 193.5H700.3V196.7H695.7V193.5Z" fill="#3d7dc8"/><path d="M716 190L722 196.7L728 190H724.3V186.7H719.7V190Z" fill="#3d7dc8"/><circle cx="749" cy="192" r="4.8" fill="none" stroke="#bdbdbd" stroke-width="2.6"/><circle cx="749" cy="192" r="6.6" fill="none" stroke="#bdbdbd" stroke-width="2.2" stroke-dasharray="2.2 3"/><path d="M762.8 190.8H768.1L765.45 194Z" fill="#111"/></svg>
<div style="left:680px;top:543px;width:1px;height:21px;background:#d4d4d4"></div>
<div style="left:761px;top:543px;width:1px;height:21px;background:#d4d4d4"></div>
<div style="left:680px;top:563px;width:82px;height:2px;background:#2b579a"></div>
<div class="t" style="left:624.10px;top:548px;font-size:11.5px;color:#000;transform:scaleX(0.9020);transform-origin:0 0;">Properties</div>
<div class="t" style="left:706.89px;top:548px;font-size:11.5px;color:#2b579a;transform:scaleX(0.9080);transform-origin:0 0;">Dictionary</div>
<div class="t" style="left:788.58px;top:548px;font-size:11.5px;color:#000;transform:scaleX(0.9250);transform-origin:0 0;">Report Tree</div>
<svg style="left:0px;top:0px;" width="899" height="601" viewBox="0 0 899 601"><rect x="602.5" y="551" width="13" height="10.5" fill="#fff" stroke="#6f6f6f" stroke-width="1"/><path d="M604.5 554.5H608M610 554.5H613.5M604.5 557H608M610 557H613.5M604.5 559.3H608M610 559.3H613.5" stroke="#8fb0dd" stroke-width="0.9"/><path d="M605.5 553.5Q608 548 612.5 546.3Q616 546 616.8 549Q614 553 609.5 553.5Z" fill="#f0c45a" stroke="#a07830" stroke-width="0.6"/><rect x="616.3" y="547" width="1.8" height="4" fill="#30b040"/><rect x="685.5" y="552.5" width="8" height="7" fill="#fff" stroke="#707070" stroke-width="1"/><rect x="685" y="552" width="9" height="2.5" fill="#4a7fc1"/><rect x="690.5" y="548.5" width="8.5" height="7" fill="#fff" stroke="#707070" stroke-width="1"/><rect x="690" y="548" width="9.5" height="2.5" fill="#4a7fc1"/><rect x="685.5" y="552.5" width="8" height="7" fill="#fff" stroke="#707070" stroke-width="1"/><rect x="685" y="552" width="9" height="2.5" fill="#4a7fc1"/><rect x="766.5" y="546.5" width="15" height="15" fill="#fff" stroke="#6f6f6f" stroke-width="1"/><rect x="769" y="549" width="4.5" height="1.6" fill="#3d74b8"/><path d="M771.5 551V558.5M772 553.5H774.5M772 557.5H774.5" stroke="#3d74b8" stroke-width="0.9" stroke-dasharray="1 1"/><rect x="775" y="552.8" width="4.2" height="1.6" fill="#3d74b8"/><rect x="775" y="556.8" width="4.2" height="1.6" fill="#3d74b8"/></svg>
<svg style="left:0px;top:0px;" width="100" height="30" viewBox="0 0 100 30"><path d="M22 8H36V22H22Z M24.3 9.3V13.3Q24.3 14.3 25.3 14.3H33Q34 14.3 34 13.3V9.3Z M25 17V20.7H27V18H29V20.7H33V17Z" fill="#fff" fill-rule="evenodd"/><path d="M50.5 12.3H56.5A4.3 4.3 0 0 1 56.5 20.9H55" fill="none" stroke="#fff" stroke-width="2"/><path d="M54.3 8.4L50.4 12.3L54.3 16.2" fill="none" stroke="#fff" stroke-width="2"/><path d="M86.5 12.3H80.5A4.3 4.3 0 0 0 80.5 20.9H82" fill="none" stroke="#7d9ccc" stroke-width="2"/><path d="M82.7 8.4L86.6 12.3L82.7 16.2" fill="none" stroke="#7d9ccc" stroke-width="2"/></svg>
<svg style="left:700px;top:30px;" width="199" height="30" viewBox="0 0 199 30"><path d="M14 21.5Q15.2 20.5 15.5 17V15Q15.5 11.3 19 11.1Q22.5 11.3 22.5 15V17Q22.8 20.5 24 21.5Z" fill="#fff"/><circle cx="19" cy="10.8" r="1" fill="#fff"/><path d="M17.3 22.2H20.7Q20.3 23.6 19 23.6Q17.7 23.6 17.3 22.2Z" fill="#fff"/><path d="M67.5 13.2H73L70.25 16Z" fill="#fff"/><circle cx="167.5" cy="16.6" r="7.8" fill="#6d6d6d"/><path d="M182 15.5H187.5L184.75 18.3Z" fill="#fff"/></svg>
<div class="t" style="left:863.20px;top:43px;font-size:8.4px;color:#fff;transform:scaleX(0.8200);transform-origin:0 0;-webkit-text-stroke:0;">JS</div>
<svg style="left:40px;top:162px;" width="22" height="20" viewBox="0 0 22 20"><circle cx="8.5" cy="9.3" r="6" fill="none" stroke="#6e6e6e" stroke-width="1"/><path d="M5.6 6.3L10 10.5L9.4 11.1Z" fill="#6e6e6e"/><rect x="6.6" y="11.5" width="3.6" height="6.8" fill="#eab866" stroke="#fff" stroke-width="0.7"/><rect x="10.6" y="8.7" width="3.6" height="9.6" fill="#6f6b66" stroke="#fff" stroke-width="0.7"/><rect x="14.6" y="10.5" width="3.6" height="7.8" fill="#2f6fb0" stroke="#fff" stroke-width="0.7"/></svg>
<div class="t" style="left:512.70px;top:197px;font-size:13px;color:#8a8a8a;transform:scaleX(0.7000);transform-origin:0 0;">?</div>
<svg style="left:554px;top:198px;" width="13" height="13" viewBox="0 0 13 13"><path d="M1 1L11 11M11 1L1 11" stroke="#7a7a7a" stroke-width="1"/></svg>
<svg style="left:525px;top:440px;" width="44" height="22" viewBox="0 0 44 22"><path d="M6.2 15.8L14.5 7.5M15.3 6.7L17.3 4.7" stroke="#4a86c8" stroke-width="3.3"/><path d="M4.8 17.2L5.3 14.8L7.2 16.7Z" fill="#4a86c8"/><path d="M29.3 9.4L33.2 13.4L37.1 9.4" fill="none" stroke="#444" stroke-width="1.2"/></svg>
<svg style="left:394px;top:477px;" width="82" height="26" viewBox="0 0 82 26"><defs><linearGradient id="bg1" x1="0" y1="0" x2="1" y2="0"><stop offset="0" stop-color="#1c86d6"/><stop offset="1" stop-color="#3ba8ef"/></linearGradient></defs><rect x="5" y="14" width="3.3" height="6.7" fill="url(#bg1)"/><rect x="9.6" y="11" width="3.3" height="9.7" fill="url(#bg1)"/><rect x="14" y="8" width="3.3" height="12.7" fill="url(#bg1)"/><rect x="18.2" y="5" width="3.3" height="15.7" fill="url(#bg1)"/><path d="M40.5 15.5h1.2v1.2h-1.2zM43.6 15.5h1.2v1.2h-1.2zM46.7 15.5h1.2v1.2h-1.2z" fill="#333"/><path d="M65 11.5L69.1 15.6L73.2 11.5" fill="none" stroke="#444" stroke-width="1.2"/></svg>
<svg style="left:576px;top:260px;" width="62" height="42" viewBox="0 0 62 42"><polygon points="1.3,20.6 30,1.3 30,11 61,11 61,30.4 30,30.4 30,40.4" fill="#ee6e79"/></svg>
<svg style="left:0px;top:0px;" width="899" height="601" viewBox="0 0 899 601"><path d="M14.5 579.3L20.5 584.3L14.5 589.3Z" fill="#fff"/><rect x="539.7" y="576.5" width="14.6" height="13.8" fill="none" stroke="#fff" stroke-width="1.5"/><rect x="575.7" y="576.5" width="14.6" height="13.8" fill="none" stroke="#fff" stroke-width="1.5"/><rect x="611.7" y="576.5" width="14.6" height="13.8" fill="none" stroke="#fff" stroke-width="1.5"/><rect x="647.7" y="576.5" width="14.6" height="13.8" fill="none" stroke="#fff" stroke-width="1.5"/><path d="M544 580.5H551M544 583.5H551M544 586.5H551M581 582.6H586M581 584.6H586" stroke="#fff" stroke-width="1.1"/><path d="M541 583.5L543.5 581V586ZM553.5 583.5L551 581V586ZM583.5 578.5L586 581H581ZM583.5 588.5L586 586H581Z" fill="#fff"/><rect x="615.8" y="578.6" width="7" height="10" fill="none" stroke="#fff" stroke-width="1.1"/><path d="M617.5 581H621M617.5 583.5H621M617.5 586H621" stroke="#fff" stroke-width="1"/><path d="M739.7 583.8H748.2M851.7 584H860.3M856 579.8V588.2" stroke="#fff" stroke-width="1.8"/><path d="M752 583.8H848" stroke="#8fa8cf" stroke-width="1"/><path d="M801.5 580V587.5" stroke="#8fa8cf" stroke-width="1"/><path d="M769.3 578H777.2V586.5L773.25 589.5L769.3 586.5Z" fill="#fff"/><rect x="890.5" y="586" width="2" height="2" fill="#fff"/><rect x="886.5" y="590" width="2" height="2" fill="#fff"/><rect x="890.5" y="590" width="2" height="2" fill="#fff"/><rect x="882.5" y="594" width="2" height="2" fill="#fff"/><rect x="886.5" y="594" width="2" height="2" fill="#fff"/><rect x="890.5" y="594" width="2" height="2" fill="#fff"/><path d="M651.2 580.8H652.8V586.1H651.2ZM650 580.8H651.5V582H650Z" fill="#fff"/><rect x="654.2" y="581.4" width="2" height="4.1" fill="none" stroke="#fff" stroke-width="1.2"/><rect x="657.9" y="581.4" width="2" height="4.1" fill="none" stroke="#fff" stroke-width="1.2"/></svg>
</body></html>
